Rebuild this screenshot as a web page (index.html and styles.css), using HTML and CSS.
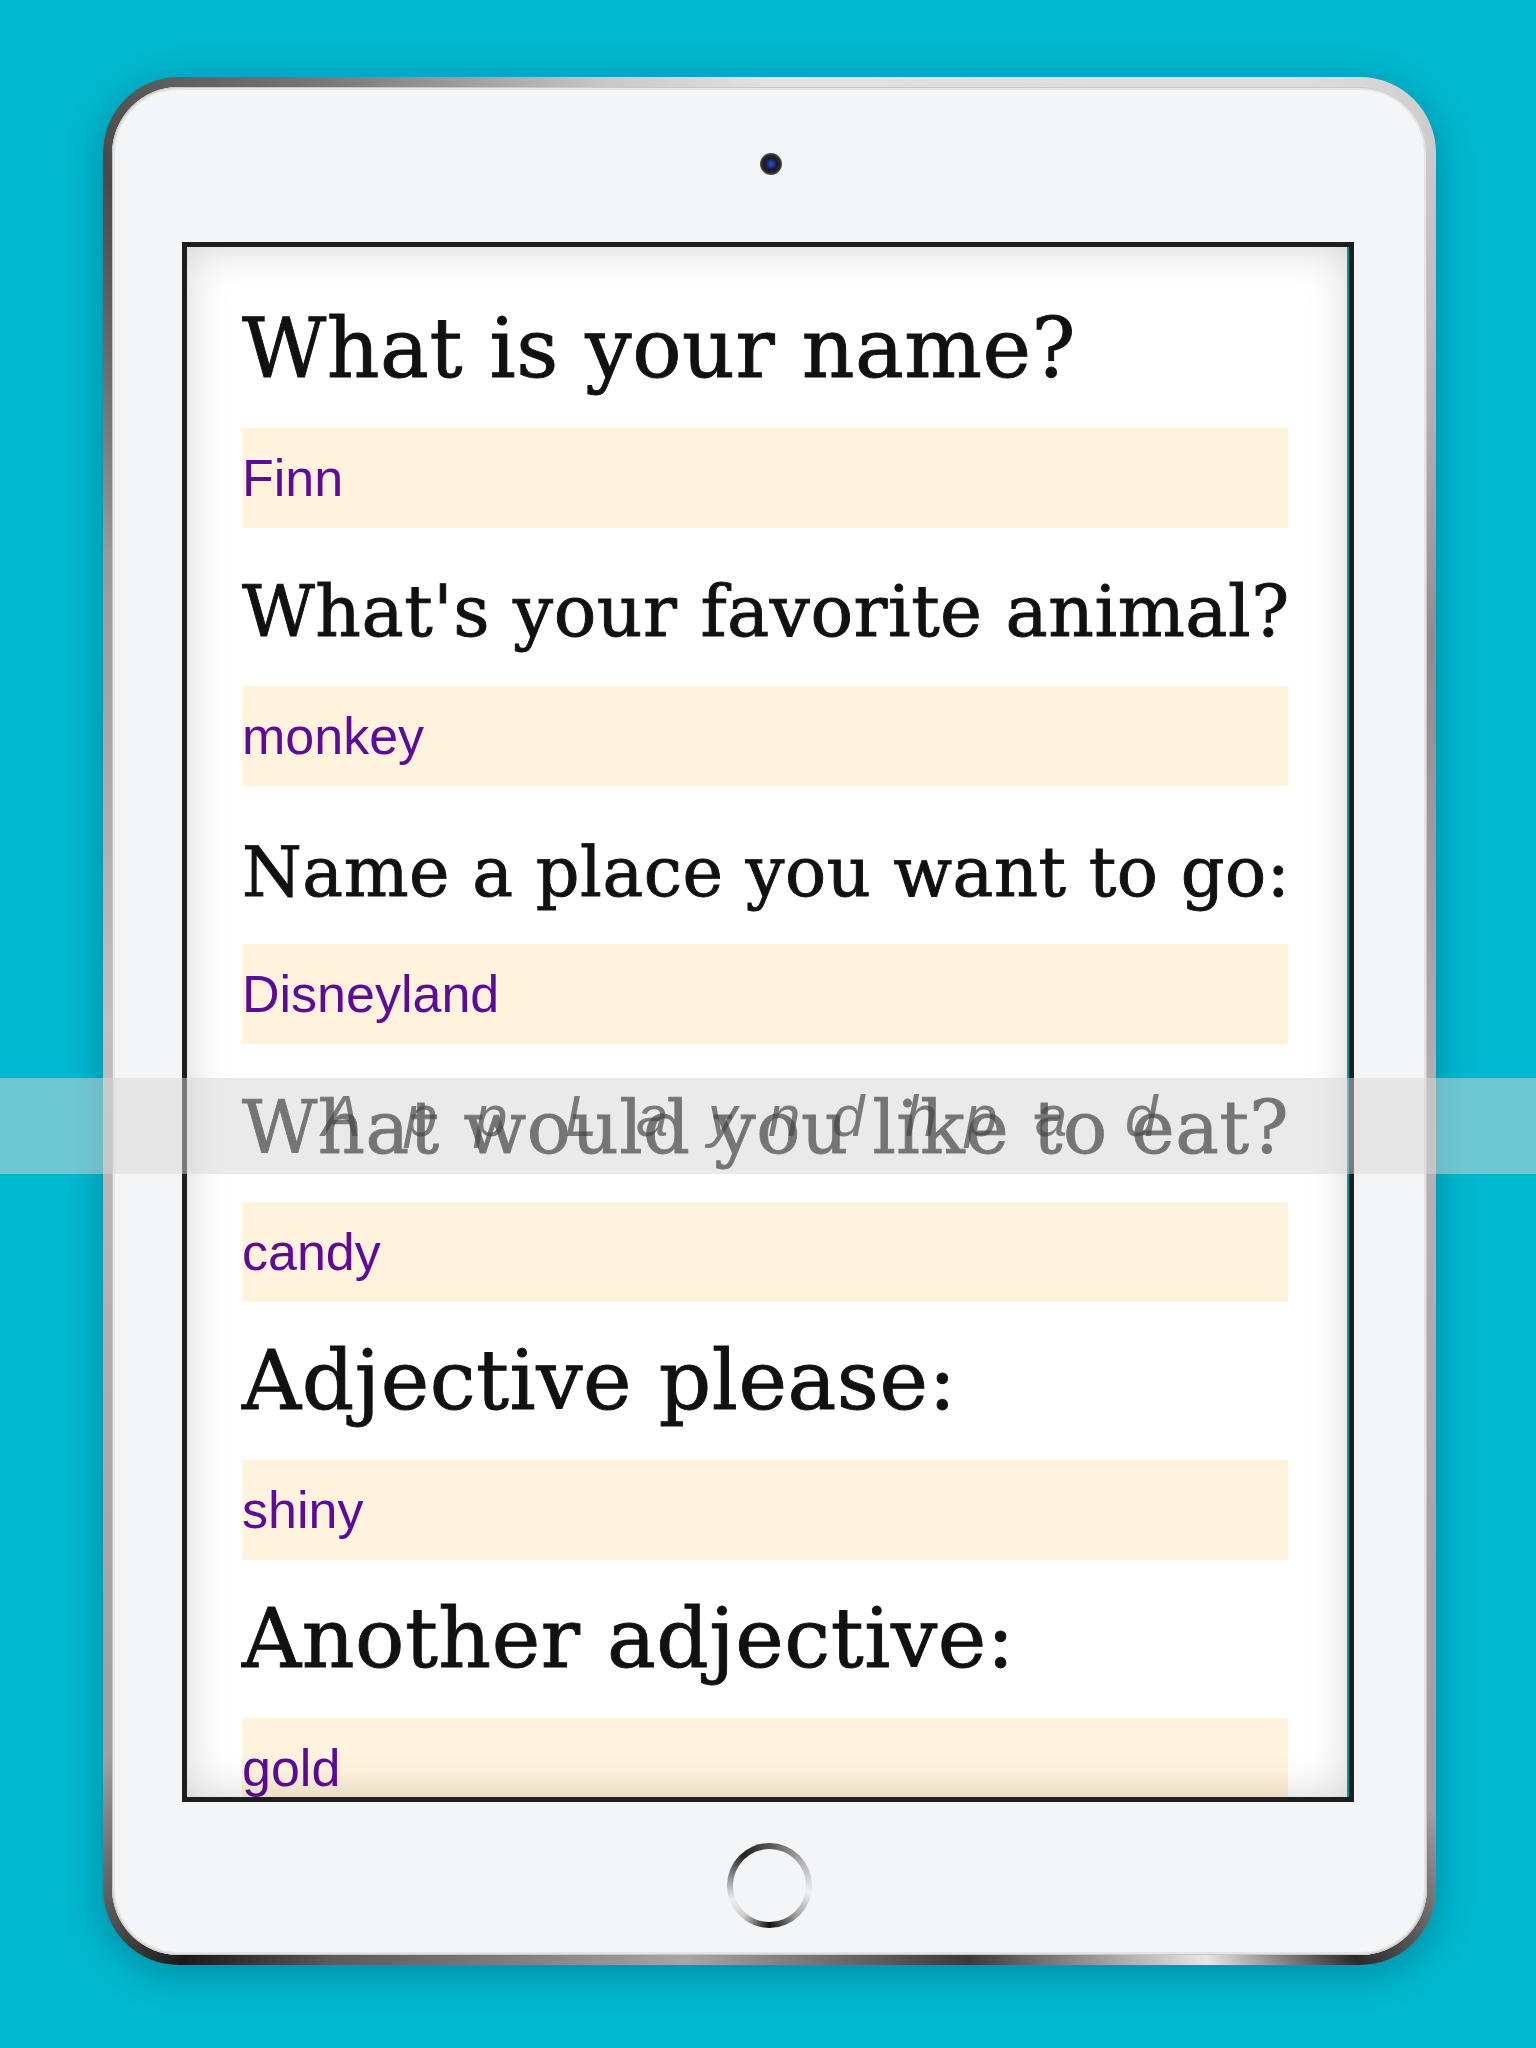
FILE: index.html
```html
<!DOCTYPE html>
<html lang="en">
<head>
<meta charset="utf-8">
<title>Mad Libs</title>
<link rel="stylesheet" href="styles.css">
</head>
<body>
<div class="stage">
  <div class="device">
    <div class="bezel">
      <div class="camera"></div>
      <div class="screen">
        <div class="content">
          <div class="item"><h2 class="q"><span>What is your name?</span></h2><div class="field">Finn</div></div>
          <div class="item"><h2 class="q"><span>What's your favorite animal?</span></h2><div class="field">monkey</div></div>
          <div class="item"><h2 class="q"><span>Name a place you want to go:</span></h2><div class="field">Disneyland</div></div>
          <div class="item"><h2 class="q"><span>What would you like to eat?</span></h2><div class="field">candy</div></div>
          <div class="item"><h2 class="q"><span>Adjective please:</span></h2><div class="field">shiny</div></div>
          <div class="item"><h2 class="q"><span>Another adjective:</span></h2><div class="field">gold</div></div>
        </div>
        <div class="vignette"></div>
      </div>
      <div class="home"><div class="home-inner"></div></div>
    </div>
  </div>
</div>
<div class="band">
  <div class="ghost"><span>A</span><span>p</span><span>p</span><span>L</span><span>a</span><span>y</span><span>n</span><span>d</span><span>h</span><span>p</span><span>a</span><span>d</span></div>
</div>
<script src="script.js"></script>
</body>
</html>
```

FILE: styles.css
```css
html, body {
  margin: 0;
  padding: 0;
}
body {
  width: 1536px;
  height: 2048px;
  overflow: hidden;
  background: #00b8cf;
  position: relative;
}
.stage {
  padding: 77px 0 0 103px;
}
.device {
  width: 1333px;
  height: 1888px;
  box-sizing: border-box;
  padding: 10px 9px;
  border-radius: 76px;
  background: conic-gradient(from 0deg at 50% 50%,
    #e2e2e2 0deg, #dcdcdc 30deg, #c4c4c4 40deg, #8e8e8e 60deg, #b4b4b4 100deg,
    #a0a0a0 140deg, #2a2a2a 148deg, #e6e6e6 155deg, #3a3a3a 168deg, #a6a6a6 185deg,
    #5a5a5a 205deg, #1a1a1a 212deg, #a0a0a0 222deg, #c0c0c0 270deg, #9a9a9a 305deg,
    #4a4a4a 322deg, #7a7a7a 335deg, #c8c8c8 350deg, #e2e2e2 360deg);
  box-shadow: 0 8px 36px rgba(0, 50, 70, 0.35);
}
.bezel {
  height: 100%;
  border-radius: 67px;
  background: #f4f5f7;
  box-shadow: inset 0 0 0 1px #c8c8c8, inset 0 0 0 3px #e4e4e4;
  display: flex;
  flex-direction: column;
  align-items: flex-start;
  padding-top: 66px;
  box-sizing: border-box;
}
.camera {
  width: 22px;
  height: 22px;
  border-radius: 50%;
  align-self: center;
  margin-left: 3px;
  background: radial-gradient(circle at 50% 50%, #3552c4 0, #1e3391 3px, #15204d 5px, #1c1c1c 6.5px, #2a2a2a 9px, #555 11px);
}
.screen {
  margin-top: 67px;
  margin-left: 70px;
  width: 1172px;
  height: 1560px;
  box-sizing: border-box;
  border: 5px solid #1e1e1e;
  background: #fff;
  position: relative;
  overflow: hidden;
}
.content {
  height: 100%;
  box-sizing: border-box;
  padding: 23px 0 0 55px;
  border-right: 2px solid #0aa5b8;
}
.item {
  width: 1046px;
}
.q {
  margin: 0;
  height: 158px;
  box-sizing: border-box;
  display: flex;
  align-items: flex-end;
  padding-bottom: 38px;
  font-family: "DejaVu Serif", "Liberation Serif", serif;
  font-weight: normal;
  font-size: 82px;
  line-height: 1;
  color: #111;
  white-space: nowrap;
  letter-spacing: 0.5px;
  -webkit-text-stroke: 0.9px #111;
}
.field {
  height: 100px;
  background: #fff3dd;
  color: #5c0b9a;
  font-family: "Liberation Sans", Arial, sans-serif;
  font-size: 52px;
  display: flex;
  align-items: center;
}
.vignette {
  position: absolute;
  inset: 0;
  box-shadow: inset 0 0 40px 2px rgba(0, 0, 0, 0.17);
  pointer-events: none;
}
.home {
  margin-top: 41px;
  margin-left: 615px;
  width: 85px;
  height: 85px;
  border-radius: 50%;
  background: conic-gradient(from 0deg, #555 0deg, #bbb 60deg, #f0f0f0 100deg, #999 140deg, #111 180deg, #ccc 220deg, #f0f0f0 250deg, #777 290deg, #222 320deg, #555 360deg);
  display: flex;
  align-items: center;
  justify-content: center;
}
.home-inner {
  width: 73px;
  height: 73px;
  border-radius: 50%;
  background: #f4f5f7;
}
.band {
  position: absolute;
  left: 0;
  top: 1078px;
  width: 100%;
  height: 96px;
  background: rgba(214, 214, 214, 0.51);
}
.ghost {
  display: grid;
  grid-template-columns: 83px 70px 90px 71px 72px 60px 64px 73px 60px 70px 90px 40px;
  margin-left: 322px;
  font-family: "Liberation Sans", Arial, sans-serif;
  font-style: italic;
  font-size: 58px;
  line-height: 76px;
  color: rgba(70, 70, 70, 0.68);
}
```

FILE: script.js
```js
document.querySelectorAll('.q').forEach(function (q) {
  var span = q.querySelector('span');
  var max = 1046;
  var w = span.getBoundingClientRect().width;
  if (w > max) {
    var fs = parseFloat(getComputedStyle(q).fontSize);
    q.style.fontSize = (fs * max / w) + 'px';
  }
});
```
